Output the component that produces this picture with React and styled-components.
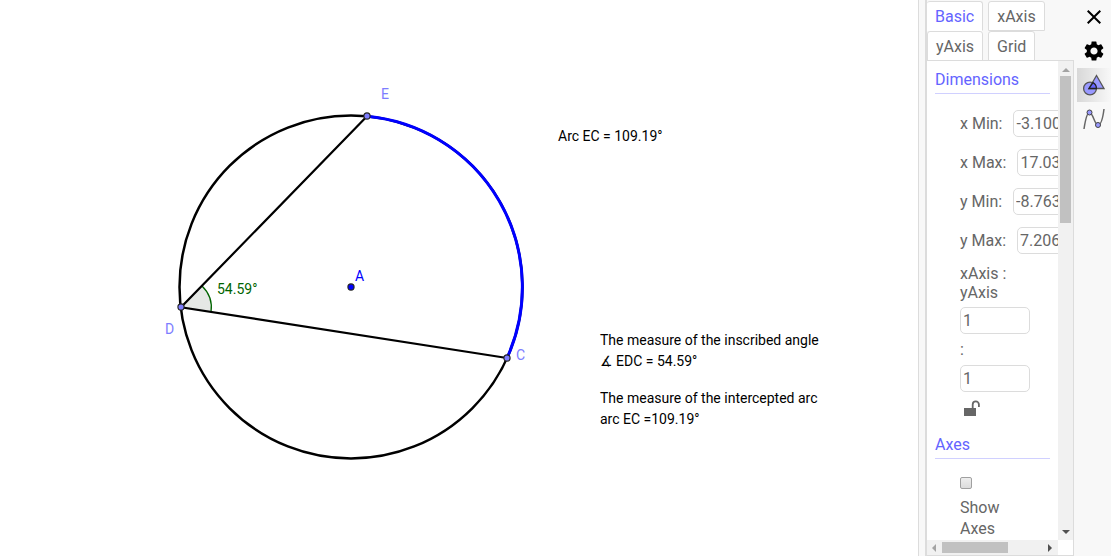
import styled, { createGlobalStyle } from "styled-components";
import { MdClose, MdSettings } from "react-icons/md";

const App = () => {
  return (
    <>
      <GlobalStyle />
      <Page>
        <Canvas>
          <Construction />
        </Canvas>
        <Settings>
          <Tabs>
            {tabs.map((t) => (
              <Tab key={t.name} $active={t.active}>
                {t.name}
              </Tab>
            ))}
          </Tabs>
          <ScrollArea>
            <Content>
              <Title>Dimensions</Title>
              <Group>
                {bounds.map((b) => (
                  <Row key={b.id}>
                    <label htmlFor={b.id}>{b.label}</label>
                    <TextBox id={b.id} defaultValue={b.value} />
                  </Row>
                ))}
                <RatioLabel htmlFor="ratioX">xAxis : yAxis</RatioLabel>
                <TextBox id="ratioX" defaultValue="1" />
                <Colon htmlFor="ratioY">:</Colon>
                <TextBox id="ratioY" defaultValue="1" />
                <LockButton aria-label="Lock ratio">
                  <LockIcon />
                </LockButton>
              </Group>
              <Title>Axes</Title>
              <Group>
                <CheckBox type="checkbox" id="showAxes" />
                <CheckLabel htmlFor="showAxes">Show Axes</CheckLabel>
              </Group>
            </Content>
            <VerticalBar>
              <Arrow d="M1 7L5 3L9 7Z" color="#a3a3a3" />
              <VerticalThumb />
              <Arrow d="M1 3L5 7L9 3Z" color="#505050" />
            </VerticalBar>
            <HorizontalBar>
              <Arrow d="M7 1L3 5L7 9Z" color="#a3a3a3" />
              <HorizontalThumb />
              <Arrow d="M3 1L7 5L3 9Z" color="#505050" />
            </HorizontalBar>
          </ScrollArea>
        </Settings>
        <SideBar>
          <SideButton aria-label="Close">
            <MdClose size={24} />
          </SideButton>
          <SideButton aria-label="Settings">
            <MdSettings size={24} />
          </SideButton>
          <SideButton aria-label="Objects" $active>
            <ShapesIcon />
          </SideButton>
          <SideButton aria-label="Graphics">
            <GraphIcon />
          </SideButton>
        </SideBar>
      </Page>
    </>
  );
};

export default App;

const Construction = () => (
  <Drawing viewBox="0 0 918 556" width="918" height="556">
    <path
      d="M181 307L202 286A30 30 0 0 1 211 312Z"
      fill="#e5e8e5"
    />
    <path
      d="M202 286A30 30 0 0 1 211 312"
      fill="none"
      stroke="#006400"
      strokeWidth="1.3"
    />
    <circle
      cx="351"
      cy="287"
      r="171.5"
      fill="none"
      stroke="#000"
      strokeWidth="2.5"
    />
    <path
      d="M367 116.3A171.5 171.5 0 0 1 507 358"
      fill="none"
      stroke="#00f"
      strokeWidth="3"
    />
    <path
      d="M367 116.3L181 307.3L507 358"
      fill="none"
      stroke="#000"
      strokeWidth="2.2"
    />
    {points.map((p) => (
      <g key={p.name}>
        <circle
          cx={p.x}
          cy={p.y}
          r="3.1"
          fill={p.fill}
          stroke="#222"
          strokeWidth="1.1"
        />
        <Label x={p.labelX} y={p.labelY} fill={p.color}>
          {p.name}
        </Label>
      </g>
    ))}
    <Label x="217" y="294" fill="#006400">
      54.59°
    </Label>
    <Label x="558" y="141">
      Arc EC = 109.19°
    </Label>
    <Label x="600" y="345">
      The measure of the inscribed angle
    </Label>
    <Label x="600" y="366">
      ∡ EDC = 54.59°
    </Label>
    <Label x="600" y="403">
      The measure of the intercepted arc
    </Label>
    <Label x="600" y="424">
      arc EC =109.19°
    </Label>
  </Drawing>
);

const Arrow = ({ d, color }) => (
  <svg width="10" height="10" viewBox="0 0 10 10">
    <path d={d} fill={color} />
  </svg>
);

const LockIcon = () => (
  <svg width="16" height="16" viewBox="0 0 16 16">
    <path d="M0 8H12V16H0Z" fill="#666" />
    <path
      d="M8.7 8V4.5A3 3 0 0 1 14.9 4.5V7"
      fill="none"
      stroke="#666"
      strokeWidth="1.8"
    />
  </svg>
);

const ShapesIcon = () => (
  <svg width="24" height="24" viewBox="0 0 24 24">
    <g stroke="#555" strokeWidth="1.3">
      <circle cx="8" cy="15.5" r="6.4" fill="#99f" />
      <path d="M14.5 2.500L22 15.500H7Z" fill="#99f" />
      <path d="M11 9.600A6.400 6.400 0 0 1 14.400 15.500H7Z" fill="#66f" stroke="#222" />
    </g>
  </svg>
);

const GraphIcon = () => (
  <svg width="24" height="24" viewBox="0 0 24 24">
    <path
      d="M2 22C3.5 12 5 5.5 7.5 5.5C11 5.5 12.5 18 16 18C19 18 21 10 22 2"
      fill="none"
      stroke="#666"
      strokeWidth="1.5"
    />
    <circle cx="7.5" cy="5.5" r="2.5" fill="#99f" stroke="#444" />
    <circle cx="16" cy="18" r="2.5" fill="#99f" stroke="#444" />
  </svg>
);

const tabs = [
  { name: "Basic", active: true },
  { name: "xAxis" },
  { name: "yAxis" },
  { name: "Grid" },
];

const bounds = [
  { id: "xMin", label: "x Min:", value: "-3.1005" },
  { id: "xMax", label: "x Max:", value: "17.0316" },
  { id: "yMin", label: "y Min:", value: "-8.7635" },
  { id: "yMax", label: "y Max:", value: "7.2064" },
];

const points = [
  { name: "A", x: 351, y: 287, labelX: 355, labelY: 281, fill: "#00f", color: "#00f" },
  { name: "C", x: 507, y: 358, labelX: 516, labelY: 360, fill: "#7d7dff", color: "#7d7dff" },
  { name: "D", x: 181, y: 307, labelX: 165, labelY: 334, fill: "#7d7dff", color: "#7d7dff" },
  { name: "E", x: 367, y: 116, labelX: 381, labelY: 99, fill: "#7d7dff", color: "#7d7dff" },
];

const GlobalStyle = createGlobalStyle`
  * {
    box-sizing: border-box;
  }
  body {
    margin: 0;
    background: white;
    font-family: Roboto, "Liberation Sans", sans-serif;
  }
  button, input {
    font-family: inherit;
  }
`;

const Page = styled.div`
  display: flex;
  height: 100vh;
  padding: 0 2px 2px 0;
  overflow: hidden;
`;

const Canvas = styled.main`
  flex: 1;
  min-width: 0;
  overflow: hidden;
`;

const Drawing = styled.svg`
  display: block;
`;

const Label = styled.text`
  font-size: 14px;
  font-family: Roboto, "DejaVu Sans", sans-serif;
`;

const Settings = styled.section`
  flex: none;
  width: 156px;
  display: flex;
  flex-direction: column;
  padding-left: 6px;
  border-left: 1px solid #dcdcdc;
  background: #f8f8f8;
  color: #666;
  font-size: 16px;
`;

const Tabs = styled.div`
  display: flex;
  flex-wrap: wrap;
  column-gap: 5px;
  padding-top: 1px;
  border-left: 2px solid #dcdcdc;
`;

const Tab = styled.button`
  height: 30px;
  padding: 0 8px;
  border: 1px solid #dcdcdc;
  border-left-width: ${(p) => (p.$active ? "0" : "1px")};
  border-bottom-color: ${(p) => (p.$active ? "white" : "#dcdcdc")};
  border-radius: 3px 3px 0 0;
  background: white;
  color: ${(p) => (p.$active ? "#6464ff" : "#666")};
  font-size: 16px;
  cursor: pointer;
`;

const ScrollArea = styled.div`
  flex: 1;
  min-height: 0;
  display: grid;
  grid-template-columns: 1fr 15px;
  grid-template-rows: 1fr 15px;
  margin-top: -1px;
  border: 1px solid #dcdcdc;
  border-left-width: 2px;
  border-top-width: 0;
  background: white;
`;

const Content = styled.div`
  min-width: 0;
  min-height: 0;
  overflow: hidden;
  padding: 0 8px;
  border-top: 1px solid #dcdcdc;
`;

const Title = styled.h2`
  margin: 0;
  padding-top: 9px;
  height: 33px;
  border-bottom: 1px solid #d0d0ff;
  color: #6464ff;
  font-size: 16px;
  font-weight: 400;
  line-height: 20px;
`;

const Group = styled.div`
  display: flex;
  flex-direction: column;
  align-items: flex-start;
  padding: 16px 0 0 25px;
`;

const Row = styled.div`
  display: flex;
  align-items: center;
  gap: 11px;
  height: 27px;
  margin-bottom: 12px;
  white-space: nowrap;
`;

const TextBox = styled.input`
  flex: none;
  width: 70px;
  height: 27px;
  padding: 0 2px;
  border: 1px solid #dcdcdc;
  border-radius: 5px;
  background: white;
  color: #666;
  font-size: 16px;
`;

const RatioLabel = styled.label`
  width: 60px;
  margin-bottom: 5px;
  margin-top: -2px;
  line-height: 19px;
`;

const Colon = styled.label`
  line-height: 31px;
`;

const LockButton = styled.button`
  display: flex;
  height: 34px;
  padding: 8px 4px;
  border: none;
  background: none;
`;

const CheckBox = styled.input`
  appearance: none;
  width: 12px;
  height: 12px;
  margin: 2px 0 8px;
  border: 1px solid #a0a0a0;
  border-radius: 2px;
  background: linear-gradient(#eee, #dcdcdc);
`;

const CheckLabel = styled.label`
  width: 60px;
  line-height: 21px;
`;

const VerticalBar = styled.div`
  display: flex;
  flex-direction: column;
  justify-content: space-between;
  align-items: center;
  padding: 4px 0 3px;
  border-top: 1px solid #dcdcdc;
  background: #f1f1f1;
`;

const VerticalThumb = styled.div`
  width: 11px;
  height: 147px;
  margin: 1px 0 auto;
  background: #c1c1c1;
`;

const HorizontalBar = styled.div`
  display: flex;
  align-items: center;
  justify-content: space-between;
  padding: 0 3px 0 2px;
  background: #f1f1f1;
`;

const HorizontalThumb = styled.div`
  width: 66px;
  height: 11px;
  margin: 0 auto 0 3px;
  background: #c1c1c1;
`;

const SideBar = styled.nav`
  flex: none;
  width: 37px;
  padding-left: 3px;
  background: #f8f8f8;
`;

const SideButton = styled.button`
  display: flex;
  align-items: center;
  justify-content: center;
  width: 34px;
  height: 34px;
  padding: 0;
  border: none;
  background: ${(p) =>
    p.$active ? "linear-gradient(to right, #d8d8d8, #f8f8f8)" : "none"};
  color: black;
  cursor: pointer;
`;
